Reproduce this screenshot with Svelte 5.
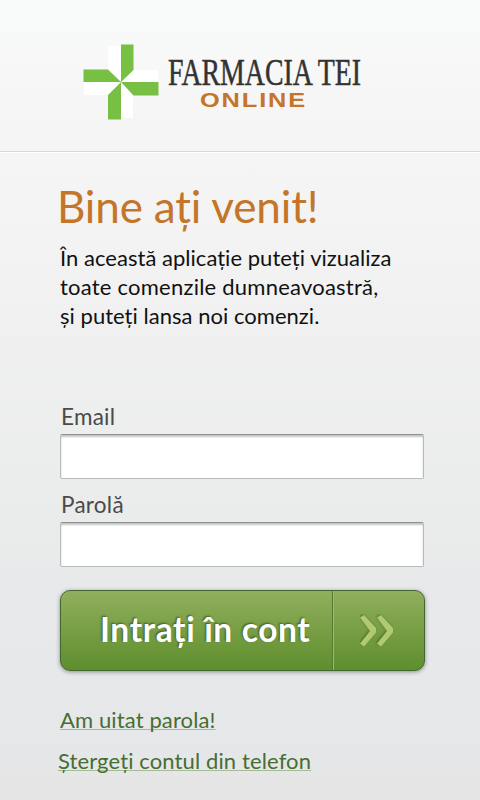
<script lang="ts">
    let email = $state('')
    let password = $state('')

    function submit(e: Event) {
        e.preventDefault()
    }
</script>

<div class="screen">
    <header>
        <svg class="logo" width="300" height="90" viewBox="75 37 300 90">
            <path class="white" d="M108 46h13v36l-13-12zM158 70v12h-37l12-12zM84 82h37l-13 13h-24zM121 82l12 13v23h-12z" />
            <path class="green" d="M121 44.500h12.500v25.500l-12.500 12zM158.500 82v13.500h-25l-12.500-13.500zM121 82v37.500h-13v-24.500zM83.500 69.500h24.500l13 12.500h-37.500z" />
            <text class="brand" x="168" y="84.500" textLength="193" lengthAdjust="spacingAndGlyphs">FARMACIA TEI</text>
            <text class="online" x="200" y="107" textLength="107" lengthAdjust="spacingAndGlyphs">ONLINE</text>
        </svg>
    </header>

    <main>
        <h1>Bine ați venit!</h1>
        <p>
            <span class="line">În această aplicație puteți vizualiza</span>
            <span class="line wide">toate comenzile dumneavoastră,</span>
            <span class="line">și puteți lansa noi comenzi.</span>
        </p>

        <form onsubmit={submit}>
            <label for="email">Email</label>
            <input id="email" type="text" bind:value={email} />
            <label for="password" class="password">Parolă</label>
            <input id="password" type="password" bind:value={password} />

            <button type="submit">
                <span class="caption">Intrați în cont</span>
                <span class="arrows">
                    <svg width="36" height="34" viewBox="0 0 36 34">
                        <path d="M0 3.500L4 1L16 14V18.500L4 32.500L0 29.500L10 17zM17 3.500L21 1L33 14V18.500L21 32.500L17 29.500L27 17z" />
                    </svg>
                </span>
            </button>
        </form>

        <nav>
            <a href="#forgot">Am uitat parola!</a>
            <a href="#remove" class="remove">Ștergeți contul din telefon</a>
        </nav>
    </main>
</div>

<style>
    :global(body) {
        margin: 0;
    }
    .screen {
        width: 480px;
        height: 800px;
        overflow: hidden;
        font-family: Lato, "Open Sans", sans-serif;
        background: linear-gradient(#f9fbfa 0, #f6f6f6 100px, #f3f3f3 240px, #f0f0f0 335px, #eceeed 450px, #e9ebea 560px, #e8e9eb 570px, #e6e7e9 740px, #e5e5e5 800px);
    }
    header {
        box-sizing: border-box;
        height: 152px;
        padding: 37px 0 0 75px;
        border-bottom: 1px solid #d8d8d8;
        box-shadow: 0 1px 0 #fff;
    }
    .logo {
        display: block;
        overflow: visible;
    }
    .white {
        fill: #fff;
    }
    .green {
        fill: #77c043;
    }
    .brand {
        font: 38px "Liberation Serif", serif;
        fill: #333;
        stroke: #333;
        stroke-width: 0.5;
    }
    .online {
        font: bold 20.5px "Liberation Sans", sans-serif;
        letter-spacing: 1.5px;
        fill: #c47528;
    }
    main {
        padding: 27px 54px 0 60px;
    }
    h1 {
        margin: 0 0 0 -3px;
        font-size: 44px;
        font-weight: 400;
        line-height: 54px;
        color: #c47528;
        letter-spacing: -0.15px;
        white-space: nowrap;
    }
    p {
        margin: 10px 0 0;
        font-size: 22px;
        line-height: 29px;
        color: #111;
    }
    .line {
        display: block;
        letter-spacing: 0.03px;
        white-space: nowrap;
    }
    .wide {
        letter-spacing: 0.23px;
    }
    form {
        margin-top: 71px;
    }
    label {
        display: block;
        box-sizing: border-box;
        height: 33px;
        padding-left: 1px;
        font-size: 22.5px;
        line-height: 32px;
        letter-spacing: 0.25px;
        color: #4a4a4a;
    }
    .password {
        margin-top: 10px;
    }
    input {
        display: block;
        box-sizing: border-box;
        width: 364px;
        height: 45px;
        padding: 0 10px;
        border: 1px solid #b9bbba;
        border-top-color: #8f9190;
        border-radius: 2px;
        outline: none;
        background: #fff;
        box-shadow: inset 0 2px 2px #c4c4c4;
        font: inherit;
        font-size: 22px;
    }
    button {
        display: flex;
        box-sizing: border-box;
        width: 365px;
        height: 81px;
        margin: 23px 0 0;
        padding: 0;
        border: 1px solid #446732;
        border-radius: 10px;
        background: linear-gradient(#91af5d, #5e8e2d);
        box-shadow: 0 1px 4px rgba(0, 0, 0, 0.4);
        font-family: inherit;
    }
    .caption {
        box-sizing: border-box;
        width: 272px;
        height: 79px;
        padding-left: 39px;
        border-right: 1px solid #567c34;
        font-size: 33.5px;
        font-weight: 700;
        line-height: 77px;
        letter-spacing: 0.65px;
        text-align: left;
        white-space: nowrap;
        color: #fff;
        text-shadow: -1px -1px 2px rgba(40, 60, 20, 0.7);
    }
    .arrows {
        display: flex;
        align-items: center;
        box-sizing: border-box;
        height: 79px;
        padding-left: 26px;
        border-left: 1px solid #9aba72;
    }
    .arrows path {
        fill: #b1ca70;
        filter: drop-shadow(-1px -1px 1px rgba(50, 75, 30, 0.5));
    }
    nav {
        display: flex;
        flex-direction: column;
        align-items: flex-start;
        margin-top: 34px;
        gap: 11px;
    }
    a {
        font-size: 22px;
        line-height: 30px;
        letter-spacing: 0.12px;
        color: #476e32;
        white-space: nowrap;
        text-decoration: underline;
        text-decoration-color: #a6b998;
        text-decoration-thickness: 1px;
        text-decoration-skip-ink: none;
        text-underline-offset: 1px;
    }
    .remove {
        margin-left: -2px;
    }
</style>
